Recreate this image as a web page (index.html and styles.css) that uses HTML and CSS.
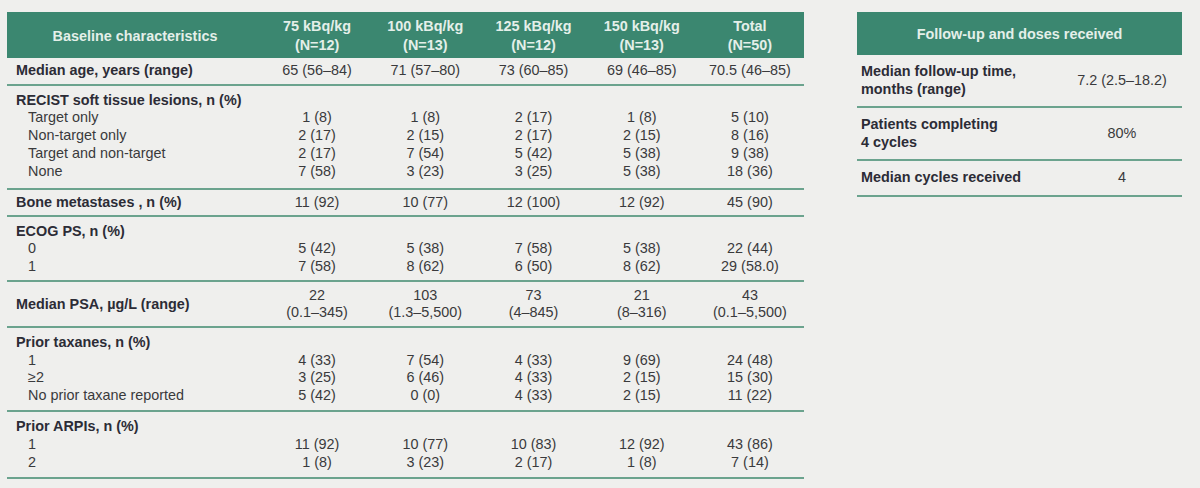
FILE: index.html
```html
<!DOCTYPE html>
<html lang="en">
<head>
<meta charset="utf-8">
<title>Baseline characteristics</title>
<link rel="stylesheet" href="styles.css">
</head>
<body>
<div class="page">
  <section class="main-table">
    <div class="head">
      <div class="h-label">Baseline characteristics</div>
      <div class="h-col">75 kBq/kg<br>(N=12)</div>
      <div class="h-col">100 kBq/kg<br>(N=13)</div>
      <div class="h-col">125 kBq/kg<br>(N=12)</div>
      <div class="h-col">150 kBq/kg<br>(N=13)</div>
      <div class="h-col">Total<br>(N=50)</div>
    </div>

    <div class="group single g-age">
      <div class="line">
        <div class="lab">Median age, years (range)</div>
        <div class="val">65 (56–84)</div><div class="val">71 (57–80)</div><div class="val">73 (60–85)</div><div class="val">69 (46–85)</div><div class="val">70.5 (46–85)</div>
      </div>
    </div>

    <div class="group g-recist">
      <div class="line"><div class="lab">RECIST soft tissue lesions, n (%)</div></div>
      <div class="line">
        <div class="sub">Target only</div>
        <div class="val">1 (8)</div><div class="val">1 (8)</div><div class="val">2 (17)</div><div class="val">1 (8)</div><div class="val">5 (10)</div>
      </div>
      <div class="line">
        <div class="sub">Non-target only</div>
        <div class="val">2 (17)</div><div class="val">2 (15)</div><div class="val">2 (17)</div><div class="val">2 (15)</div><div class="val">8 (16)</div>
      </div>
      <div class="line">
        <div class="sub">Target and non-target</div>
        <div class="val">2 (17)</div><div class="val">7 (54)</div><div class="val">5 (42)</div><div class="val">5 (38)</div><div class="val">9 (38)</div>
      </div>
      <div class="line">
        <div class="sub">None</div>
        <div class="val">7 (58)</div><div class="val">3 (23)</div><div class="val">3 (25)</div><div class="val">5 (38)</div><div class="val">18 (36)</div>
      </div>
    </div>

    <div class="group single g-bone">
      <div class="line">
        <div class="lab">Bone metastases , n (%)</div>
        <div class="val">11 (92)</div><div class="val">10 (77)</div><div class="val">12 (100)</div><div class="val">12 (92)</div><div class="val">45 (90)</div>
      </div>
    </div>

    <div class="group g-ecog">
      <div class="line"><div class="lab">ECOG PS, n (%)</div></div>
      <div class="line">
        <div class="sub">0</div>
        <div class="val">5 (42)</div><div class="val">5 (38)</div><div class="val">7 (58)</div><div class="val">5 (38)</div><div class="val">22 (44)</div>
      </div>
      <div class="line">
        <div class="sub">1</div>
        <div class="val">7 (58)</div><div class="val">8 (62)</div><div class="val">6 (50)</div><div class="val">8 (62)</div><div class="val">29 (58.0)</div>
      </div>
    </div>

    <div class="group g-psa">
      <div class="line">
        <div class="lab">Median PSA, µg/L (range)</div>
        <div class="val">22<br>(0.1–345)</div><div class="val">103<br>(1.3–5,500)</div><div class="val">73<br>(4–845)</div><div class="val">21<br>(8–316)</div><div class="val">43<br>(0.1–5,500)</div>
      </div>
    </div>

    <div class="group">
      <div class="line"><div class="lab">Prior taxanes, n (%)</div></div>
      <div class="line">
        <div class="sub">1</div>
        <div class="val">4 (33)</div><div class="val">7 (54)</div><div class="val">4 (33)</div><div class="val">9 (69)</div><div class="val">24 (48)</div>
      </div>
      <div class="line">
        <div class="sub">≥2</div>
        <div class="val">3 (25)</div><div class="val">6 (46)</div><div class="val">4 (33)</div><div class="val">2 (15)</div><div class="val">15 (30)</div>
      </div>
      <div class="line">
        <div class="sub">No prior taxane reported</div>
        <div class="val">5 (42)</div><div class="val">0 (0)</div><div class="val">4 (33)</div><div class="val">2 (15)</div><div class="val">11 (22)</div>
      </div>
    </div>

    <div class="group">
      <div class="line"><div class="lab">Prior ARPIs, n (%)</div></div>
      <div class="line">
        <div class="sub">1</div>
        <div class="val">11 (92)</div><div class="val">10 (77)</div><div class="val">10 (83)</div><div class="val">12 (92)</div><div class="val">43 (86)</div>
      </div>
      <div class="line">
        <div class="sub">2</div>
        <div class="val">1 (8)</div><div class="val">3 (23)</div><div class="val">2 (17)</div><div class="val">1 (8)</div><div class="val">7 (14)</div>
      </div>
    </div>
  </section>

  <section class="side-table">
    <div class="side-head">Follow-up and doses received</div>
    <div class="side-row">
      <div class="side-lab">Median follow-up time,<br>months (range)</div>
      <div class="side-val">7.2 (2.5–18.2)</div>
    </div>
    <div class="side-row">
      <div class="side-lab">Patients completing<br>4 cycles</div>
      <div class="side-val">80%</div>
    </div>
    <div class="side-row">
      <div class="side-lab">Median cycles received</div>
      <div class="side-val">4</div>
    </div>
  </section>
</div>
</body>
</html>
```

FILE: styles.css
```css
* { box-sizing: border-box; }

html, body {
  margin: 0;
  padding: 0;
  background: #efefed;
}

body {
  font-family: "Liberation Sans", Arial, sans-serif;
  font-size: 14.4px;
  color: #3a3a3c;
}

.page {
  display: flex;
  align-items: flex-start;
  gap: 53px;
  padding: 12px 0 0 7px;
}

.main-table {
  width: 797px;
}

.head {
  display: grid;
  grid-template-columns: 256px repeat(5, 1fr);
  align-items: center;
  height: 46px;
  padding-top: 2px;
  background: #3b8770;
  color: #e4efe9;
  font-weight: bold;
  line-height: 19px;
  text-align: center;
}

.group {
  border-bottom: 2px solid #6ba38e;
  padding: 6px 0 6px;
}

.group.single {
  padding: 4px 0 4px;
}

.g-age { padding: 5px 0 3px; }
.g-recist { padding: 6px 0 7px; }
.g-recist .line { line-height: 17.8px; }
.g-ecog { padding: 6px 0 5px; }
.g-ecog .line { line-height: 17.2px; }
.g-psa { padding: 5px 0 4px; }

.line {
  display: grid;
  grid-template-columns: 256px repeat(5, 1fr);
  align-items: center;
  line-height: 17.6px;
}

.lab {
  padding-left: 9px;
  font-weight: bold;
  color: #2c2c36;
}

.sub {
  padding-left: 21px;
}

.val {
  text-align: center;
}

.side-table {
  width: 325px;
}

.side-head {
  height: 43px;
  display: flex;
  align-items: center;
  justify-content: center;
  background: #3b8770;
  color: #e4efe9;
  font-weight: bold;
}

.side-row {
  display: grid;
  grid-template-columns: 205px 1fr;
  align-items: center;
  line-height: 17.6px;
  padding: 8px 0;
  border-bottom: 2px solid #6ba38e;
}

.side-lab {
  padding-left: 4px;
  font-weight: bold;
  color: #2c2c36;
}

.side-val {
  text-align: center;
}
```
